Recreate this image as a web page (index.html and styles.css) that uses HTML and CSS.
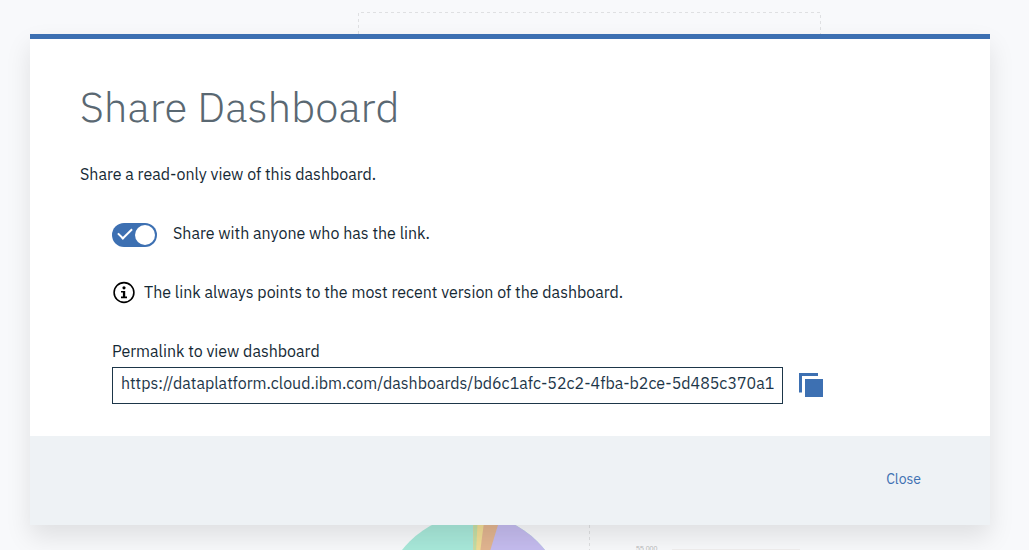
FILE: index.html
```html
<!DOCTYPE html>
<html lang="en">
<head>
<meta charset="utf-8">
<title>Share Dashboard</title>
<link rel="stylesheet" href="styles.css">
</head>
<body>
<svg class="canvas" width="1029" height="550" viewBox="0 0 1029 550" aria-hidden="true">
  <path class="dash" d="M358.500 34V12.500H820.500V34M589.500 525V550"/>
  <circle cx="473.500" cy="605.300" r="90.400" fill="#a8e9da"/>
  <path d="M473.500 605.300V514.900A90.400 90.400 0 0 1 563.900 605.300Z" fill="#c5bcef"/>
  <path d="M473.500 605.300V514.900A90.400 90.400 0 0 1 499.900 518.800Z" fill="#e2b590"/>
  <path d="M473.500 605.300V514.900A90.400 90.400 0 0 1 484.800 515.600Z" fill="#f0dd96"/>
  <path d="M473.500 605.300V514.900A90.400 90.400 0 0 1 477.900 515Z" fill="#c3dfa6"/>
  <text class="tick" x="636" y="551">55,000</text>
  <path d="M672 549.500H800" stroke="#f0eeee"/>
</svg>
<main class="modal" role="dialog" aria-modal="true" aria-labelledby="title">
  <div class="content">
    <h1 class="title" id="title">Share Dashboard</h1>
    <p class="intro">Share a read-only view of this dashboard.</p>
    <div class="options">
      <label class="share">
        <input class="toggle" type="checkbox" checked>
        <span>Share with anyone who has the link.</span>
      </label>
      <p class="info">
        <svg width="24" height="24" viewBox="0 0 24 24" aria-hidden="true">
          <circle cx="12" cy="12.500" r="9.900" fill="none" stroke="#000" stroke-width="1.600"/>
          <circle cx="12" cy="7.800" r="1.600"/>
          <path d="M9 11H13.200V16.600H15V18.200H9V16.600H10.900V12.600H9Z"/>
        </svg>
        <span>The link always points to the most recent version of the dashboard.</span>
      </p>
      <label class="link-label" for="permalink">Permalink to view dashboard</label>
      <div class="link-row">
        <input class="link" id="permalink" type="text" readonly value="https://dataplatform.cloud.ibm.com/dashboards/bd6c1afc-52c2-4fba-b2ce-5d485c370a1f">
        <button class="copy" type="button" aria-label="Copy link">
          <svg width="24" height="24" viewBox="0 0 24 24" aria-hidden="true">
            <path d="M0 0H19V3H3V19.500H0ZM6 6H24V24H6Z" fill="#3d70b2"/>
          </svg>
        </button>
      </div>
    </div>
  </div>
  <div class="footer"><button class="close" type="button">Close</button></div>
</main>
</body>
</html>
```
FILE: styles.css
```css
* { box-sizing: border-box; }
body {
  margin: 0;
  padding: 34px 39px 25px 30px;
  background: #f8f9fb;
  color: #152935;
  font: 16px/24px "IBM Plex Sans", Roboto, sans-serif;
}
button, input { margin: 0; font: inherit; }
.canvas { position: absolute; top: 0; left: 0; }
.dash { fill: none; stroke: #dfe0e2; stroke-dasharray: 3 3; }
.tick { fill: #bbb; font-family: "Liberation Sans", Arial, sans-serif; font-size: 7px; }
.modal {
  position: relative;
  border-top: 5px solid #3d70b2;
  background: #fff;
  box-shadow: 0 12px 24px rgba(0, 0, 0, 0.1);
}
.content { padding: 40px 50px 32px; }
.title {
  margin: 0;
  color: #5a6872;
  font-size: 42px;
  font-weight: 300;
  line-height: 56px;
}
.intro { margin: 27px 0 0; }
.options { padding: 35px 32px 0; }
.share { display: flex; align-items: flex-start; gap: 16px; }
.toggle {
  display: grid;
  flex: none;
  width: 45px;
  height: 24px;
  margin-top: 2px;
  appearance: none;
  border-radius: 12px;
  background: #3d70b2;
}
.toggle::before, .toggle::after { content: ""; grid-area: 1 / 1; align-self: center; }
.toggle::before {
  width: 12px;
  height: 6px;
  margin: 0 0 6px 6px;
  border: solid #fff;
  border-width: 0 0 2px 2px;
  transform: rotate(-45deg);
}
.toggle::after {
  justify-self: end;
  width: 20px;
  height: 20px;
  margin-right: 2px;
  border-radius: 50%;
  background: #fff;
}
.info { display: flex; align-items: center; gap: 8px; margin: 33px 0 35px; }
.link-label { display: block; }
.link-row { display: flex; align-items: center; gap: 16px; margin-top: 4px; }
.link {
  flex: 0 1 671px;
  min-width: 0;
  height: 37px;
  padding: 0 8px 5px;
  border: 1px solid #1d3649;
  border-radius: 0;
  background: #fff;
  color: #1d3649;
}
.copy { display: flex; padding: 0 0 2px; border: 0; background: none; }
.footer {
  display: flex;
  justify-content: flex-end;
  padding: 31px 69px 34px;
  background: #eef2f5;
}
.close { padding: 0; border: 0; background: none; color: #3d70b2; font-size: 14px; line-height: 24px; }
```
